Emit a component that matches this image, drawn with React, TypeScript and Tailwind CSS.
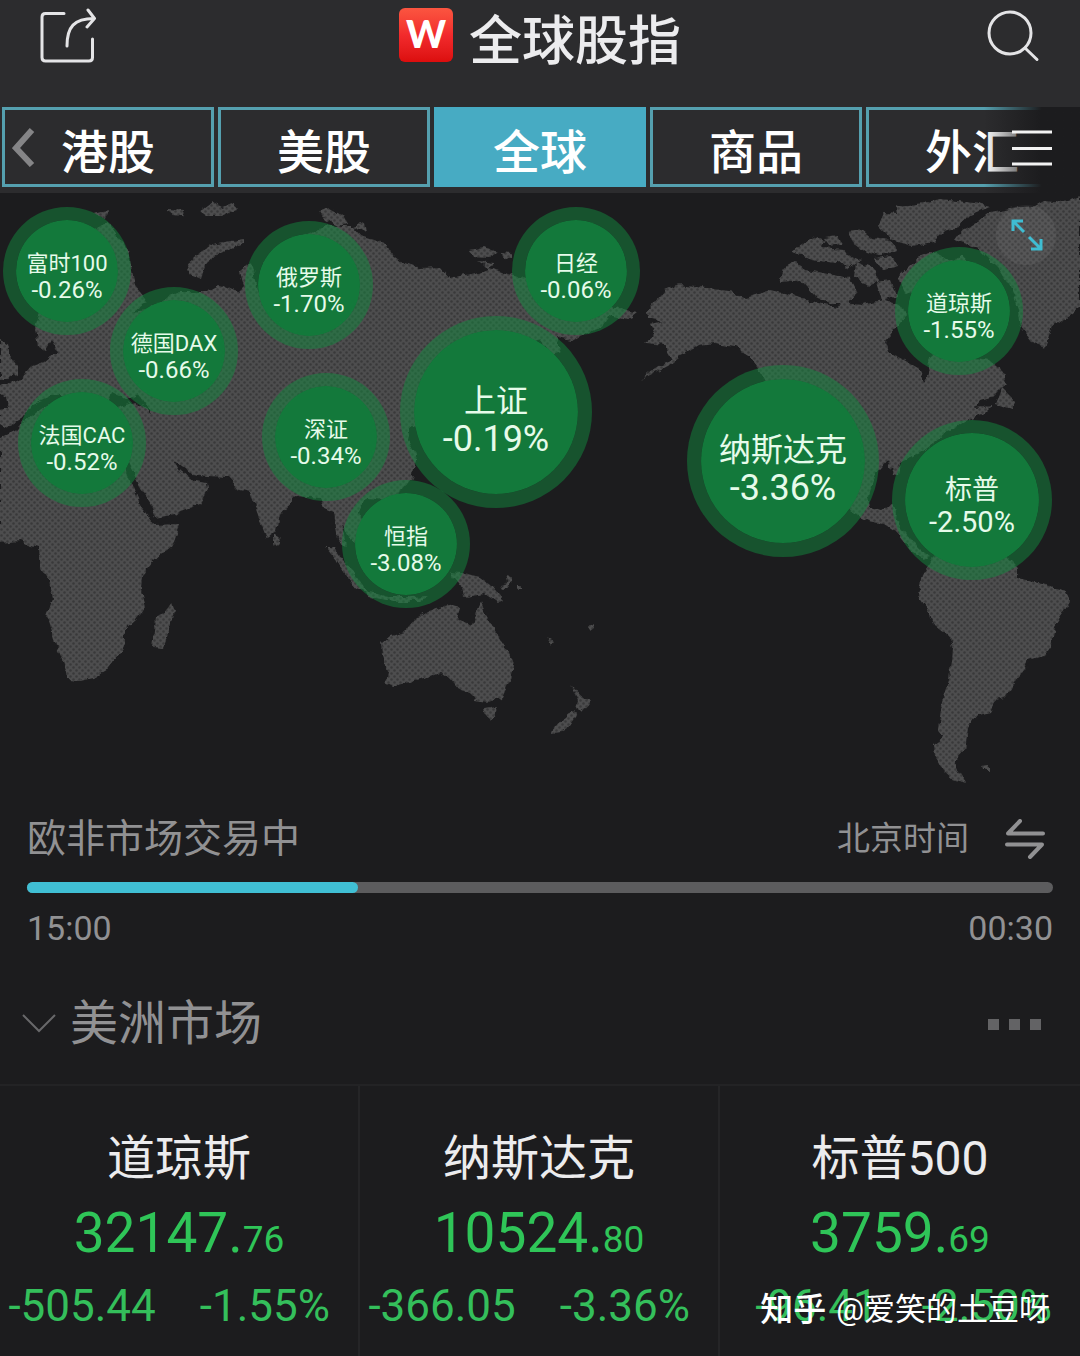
import type { CSSProperties } from 'react'

type BubbleSize = 'sm' | 'md' | 'lg'

interface Bubble {
  name: string
  change: string
  x: number
  y: number
  size: BubbleSize
}

// bubble centres, in map units
const MAP_WIDTH = 1080
const MAP_HEIGHT = 602

const bubbles: Bubble[] = [
  { name: '富时100', change: '-0.26%', x: 67, y: 78, size: 'sm' },
  { name: '德国DAX', change: '-0.66%', x: 174, y: 158, size: 'sm' },
  { name: '法国CAC', change: '-0.52%', x: 82, y: 250, size: 'sm' },
  { name: '俄罗斯', change: '-1.70%', x: 309, y: 92, size: 'sm' },
  { name: '深证', change: '-0.34%', x: 326, y: 244, size: 'sm' },
  { name: '恒指', change: '-3.08%', x: 406, y: 351, size: 'sm' },
  { name: '日经', change: '-0.06%', x: 576, y: 78, size: 'sm' },
  { name: '上证', change: '-0.19%', x: 496, y: 219, size: 'lg' },
  { name: '道琼斯', change: '-1.55%', x: 959, y: 118, size: 'sm' },
  { name: '纳斯达克', change: '-3.36%', x: 783, y: 268, size: 'lg' },
  { name: '标普', change: '-2.50%', x: 972, y: 307, size: 'md' },
]

const bubbleSizes: Record<BubbleSize, { ring: string; name: string; change: string }> = {
  sm: { ring: 'size-32 border-[13px] pt-3', name: 'text-[22px] leading-[26px]', change: 'text-[24px] leading-[26px]' },
  md: { ring: 'size-40 border-[13px] pt-3', name: 'text-[27px] leading-8', change: 'text-[29px] leading-8' },
  lg: { ring: 'size-48 border-[14px] pt-4', name: 'text-[32px] leading-[38px]', change: 'text-[36px] leading-[38px]' },
}

const tabs = ['港股', '美股', '全球', '商品', '外汇']

const quotes = [
  { name: '道琼斯', whole: '32147', decimals: '76', change: '-505.44', percent: '-1.55%' },
  { name: '纳斯达克', whole: '10524', decimals: '80', change: '-366.05', percent: '-3.36%' },
  { name: '标普500', whole: '3759', decimals: '69', change: '-96.41', percent: '-2.50%' },
]

const land = [
  // Europe, Asia
  'M0 452 L0 438 L15 431 L25 421 L48 404 L60 414 L80 420 L84 408 L96 425 L112 420 L118 408 L135 402 L152 414 L138 394 L128 400 L112 392 L108 404 L92 406 L70 396 L50 396 L32 404 L20 420 L6 428 L0 424 L0 410 L8 408 L6 396 L0 392 L0 386 L20 380 L32 366 L44 362 L56 352 L52 340 L46 350 L38 346 L35 328 L44 300 L66 268 L88 234 L108 222 L128 250 L135 286 L148 302 L132 312 L146 310 L170 296 L180 292 L205 292 L220 284 L238 292 L244 286 L240 272 L252 262 L258 290 L262 302 L266 280 L262 262 L290 240 L330 226 L352 226 L362 237 L385 243 L392 255 L402 262 L420 268 L440 267 L450 278 L480 272 L490 268 L508 274 L530 280 L560 290 L595 302 L620 308 L637 313 L628 320 L608 316 L602 328 L585 334 L572 341 L556 338 L562 352 L552 356 L540 340 L516 350 L500 400 L460 420 L424 432 L410 426 L408 440 L417 455 L412 478 L402 490 L385 500 L366 498 L360 512 L366 532 L356 542 L346 534 L342 524 L346 548 L338 540 L334 512 L324 508 L320 498 L296 496 L280 514 L277 530 L267 538 L258 515 L250 492 L240 490 L228 477 L206 476 L192 474 L182 466 L174 460 L180 470 L190 479 L207 482 L208 490 L200 504 L176 514 L156 518 L152 507 L140 487 L130 466 L122 448 Z',
  // Africa
  'M0 450 L30 446 L60 452 L90 456 L120 454 L131 482 L141 506 L154 525 L180 524 L173 545 L155 560 L142 575 L141 590 L145 608 L136 620 L125 630 L125 645 L117 656 L104 672 L94 678 L80 681 L68 680 L62 660 L56 646 L50 624 L47 615 L53 598 L49 580 L40 567 L38 548 L28 545 L20 541 L0 543 Z',
  'M172 603 L175 612 L168 636 L163 648 L152 647 L154 630 L155 617 L165 613 Z',
  'M0 340 L8 344 L10 354 L18 366 L18 374 L8 380 L0 380 Z',
  // Arctic islands north of Russia
  'M187 270 L195 256 L212 244 L244 239 L244 244 L218 254 L206 264 L202 279 L192 276 Z',
  'M165 210 L185 211 L183 216 L172 215 Z',
  'M200 212 L212 203 L222 208 L232 204 L236 209 L218 216 L206 216 Z',
  'M92 214 L108 211 L106 218 Z',
  'M320 211 L330 208 L344 216 L348 224 L338 226 L326 220 Z',
  'M352 226 L364 222 L366 232 Z',
  'M470 250 L484 247 L496 252 L488 258 L474 257 Z',
  'M478 262 L494 264 L488 268 Z',
  'M501 252 L512 253 L512 259 L503 258 Z',
  // South Asia, Indonesia, Papua
  'M273 534 L280 541 L277 546 L273 543 Z',
  'M325 547 L335 547 L344 562 L354 572 L368 592 L356 588 L345 574 L336 560 Z',
  'M366 590 L392 597 L410 597 L428 596 L420 601 L392 601 L370 597 Z',
  'M372 560 L390 545 L400 556 L392 576 L376 576 Z',
  'M410 560 L425 558 L416 566 L422 580 L412 580 Z',
  'M450 572 L463 573 L480 577 L490 585 L503 600 L498 603 L485 594 L465 597 L463 588 Z',
  'M506 575 L512 576 L512 583 L502 588 L500 584 L508 582 Z',
  'M518 586 h4 v4 h-4 Z',
  'M547 638 l6 3 l-2 3 Z',
  'M588 628 l6 -5 l1 4 l-5 4 Z',
  // Australia, New Zealand
  'M382 643 L390 636 L405 632 L415 620 L428 612 L440 608 L448 603 L460 607 L457 619 L473 625 L477 612 L481 602 L486 615 L492 625 L500 640 L508 652 L513 665 L510 680 L502 698 L488 702 L475 700 L468 693 L460 690 L450 678 L440 673 L425 679 L410 682 L393 686 L386 682 L388 672 L383 655 Z',
  'M484 708 L497 706 L495 716 L490 722 L486 716 Z',
  'M571 685 L583 698 L591 701 L581 712 L576 708 L579 700 Z',
  'M573 710 L577 714 L565 732 L551 733 L553 727 L566 718 Z',
  // North America
  'M642 379 L655 368 L672 358 L665 345 L645 343 L655 335 L650 325 L664 322 L648 318 L647 312 L655 302 L665 290 L680 284 L700 287 L735 292 L746 298 L770 290 L796 296 L818 304 L838 308 L842 302 L862 304 L884 300 L900 304 L906 316 L896 328 L884 342 L888 352 L904 360 L918 368 L924 383 L930 374 L928 360 L940 348 L960 356 L990 360 L1003 371 L1006 384 L994 396 L980 400 L974 408 L992 406 L984 414 L968 420 L950 430 L938 440 L922 452 L900 462 L898 476 L893 474 L888 460 L874 476 L868 496 L870 508 L880 511 L892 504 L898 508 L897 522 L910 538 L922 550 L930 556 L924 560 L910 550 L896 532 L884 524 L868 521 L850 511 L830 490 L800 450 L780 410 L762 375 L750 356 L735 347 L715 344 L698 346 L688 352 L680 356 L668 366 Z',
  'M996 404 L1002 388 L1008 394 L1016 402 L1012 409 Z',
  'M780 282 L785 266 L795 261 L806 270 L828 274 L850 278 L858 294 L846 304 L830 304 L814 296 L800 280 Z',
  'M792 252 L806 242 L818 236 L826 242 L822 248 L844 250 L848 256 L836 263 L812 260 Z',
  'M848 232 L862 230 L872 238 L890 240 L896 250 L880 256 L866 252 L852 242 Z',
  'M856 262 L872 268 L880 280 L868 286 L854 276 Z',
  'M876 282 L890 280 L896 296 L882 302 Z',
  'M832 256 L846 254 L860 260 L846 268 Z',
  'M824 238 L838 236 L842 244 L830 246 Z',
  'M874 258 L892 256 L898 266 L884 270 Z',
  'M878 226 L884 213 L898 214 L896 206 L918 204 L940 199 L975 203 L990 207 L970 215 L958 228 L944 232 L934 242 L912 246 L892 240 Z',
  'M898 276 L918 258 L936 252 L950 262 L962 256 L976 272 L992 292 L998 306 L988 312 L976 306 L952 290 L930 284 L906 294 Z',
  // Greenland
  'M1080 196 L1062 203 L1045 201 L1036 206 L1010 208 L990 212 L978 222 L962 230 L955 240 L978 248 L1000 270 L1012 290 L1018 306 L1021 326 L1034 344 L1045 348 L1052 326 L1066 319 L1080 308 Z',
  // South America
  'M930 563 L922 575 L918 595 L928 608 L934 624 L950 637 L952 650 L949 680 L942 705 L938 728 L942 738 L934 744 L935 757 L943 770 L953 779 L966 783 L956 768 L956 760 L965 750 L968 728 L976 716 L990 712 L996 700 L1006 697 L1015 683 L1024 668 L1028 660 L1045 655 L1052 645 L1055 625 L1070 602 L1065 592 L1050 586 L1034 582 L1018 578 L1018 568 L1008 558 L985 548 L955 545 L935 552 Z',
  'M981 766 L988 765 L988 770 L982 770 Z',
]

function ShareIcon() {
  return (
    <svg className="size-full" viewBox="40 8 56 56" fill="none" stroke="#e4e4e6" strokeWidth="3" strokeLinecap="round" strokeLinejoin="round">
      <path d="M64 13.5H45.500Q42 13.500 42 17V57.500Q42 61 45.500 61H89Q92.500 61 92.500 57.500V39" />
      <path d="M67 46C67 27 74 18.500 94 18.500M88 10L94.500 18.500L87 27" />
    </svg>
  )
}

function SearchIcon() {
  return (
    <svg className="size-full" viewBox="984 8 56 56" fill="none" stroke="#e4e4e6" strokeWidth="3" strokeLinecap="round">
      <circle cx="1010" cy="33" r="21" />
      <path d="M1025 48L1037 59.500" />
    </svg>
  )
}

function WorldMap() {
  return (
    <svg className="block w-full" viewBox="0 193 1080 602" aria-hidden="true">
      <defs>
        <pattern id="dots" width="6" height="6" patternUnits="userSpaceOnUse">
          <rect width="6" height="6" fill="#4d4d4e" />
          <circle cx="1.500" cy="1.500" r="1.300" fill="#39393a" />
          <circle cx="4.500" cy="4.500" r="1.300" fill="#39393a" />
        </pattern>
        <filter id="coast" x="0" y="0" width="100%" height="100%">
          <feTurbulence type="fractalNoise" baseFrequency="0.12" numOctaves="2" seed="4" result="noise" />
          <feDisplacementMap in="SourceGraphic" in2="noise" scale="7" xChannelSelector="R" yChannelSelector="G" />
        </filter>
        <mask id="land" maskUnits="userSpaceOnUse" x="0" y="193" width="1080" height="602">
          <g filter="url(#coast)" fill="#fff">
            {land.map((d) => (
              <path key={d} d={d} />
            ))}
          </g>
        </mask>
      </defs>
      <rect x="0" y="193" width="1080" height="602" fill="url(#dots)" mask="url(#land)" />
    </svg>
  )
}

function MapBubble({ bubble }: { bubble: Bubble }) {
  const size = bubbleSizes[bubble.size]
  const place: CSSProperties = {
    left: `${(bubble.x / MAP_WIDTH) * 100}%`,
    top: `${(bubble.y / MAP_HEIGHT) * 100}%`,
  }
  return (
    <button
      type="button"
      style={place}
      className={`absolute flex -translate-x-1/2 -translate-y-1/2 flex-col items-center justify-center rounded-full border-[#128a3e]/50 bg-[#13793b] bg-clip-padding whitespace-nowrap text-[#e6fbea] ${size.ring}`}
    >
      <span className={size.name}>{bubble.name}</span>
      <span className={size.change}>{bubble.change}</span>
    </button>
  )
}

export default function App() {
  return (
    <div className="relative min-h-screen overflow-hidden bg-[#1c1c1e] font-[Roboto,'Noto_Sans_CJK_SC',sans-serif]">
      <header className="flex h-[107px] items-start justify-between bg-[#2c2c2e] px-10 pt-2">
        <button type="button" aria-label="分享" className="size-14">
          <ShareIcon />
        </button>
        <div className="flex items-start gap-4">
          <span className="flex size-[54px] items-center justify-center rounded-md bg-linear-to-b from-[#fb5540] via-[#f22a2c] to-[#dc0d0d] pb-1 font-[Lato,sans-serif] text-[38px] leading-none font-black text-white">
            W
          </span>
          <h1 className="pt-0.5 text-[53px] leading-[64px] font-medium text-[#ececee]">全球股指</h1>
        </div>
        <button type="button" aria-label="搜索" className="size-14">
          <SearchIcon />
        </button>
      </header>

      <nav className="relative grid grid-cols-5 gap-1 bg-[#2c2c2e] px-0.5 pb-1.5">
        {tabs.map((tab) => (
          <button
            key={tab}
            type="button"
            className={`h-20 border-3 pt-2 text-[47px] font-medium text-white ${
              tab === '全球' ? 'border-[#47abc3] bg-[#47abc3]' : 'border-[#55a0af]'
            }`}
          >
            {tab}
          </button>
        ))}
        <svg className="absolute top-5 left-3 h-10 w-6" viewBox="0 0 24 40" fill="none" stroke="#858587" strokeWidth="6" aria-hidden="true">
          <path d="M20 3L4 21L20 38" />
        </svg>
        <div className="absolute inset-y-0 right-0 flex w-24 items-center justify-end bg-linear-to-r from-transparent to-[#1c1c1e] to-60% pr-7 pb-1">
          <button type="button" aria-label="更多市场">
            <svg className="h-9 w-10" viewBox="0 0 40 36" stroke="#f2f2f2" strokeWidth="3">
              <path d="M0 2H40M0 18.500H40M0 34H40" />
            </svg>
          </button>
        </div>
      </nav>

      <section className="relative" aria-label="全球指数地图">
        <WorldMap />
        {bubbles.map((bubble) => (
          <MapBubble key={bubble.name} bubble={bubble} />
        ))}
        <button type="button" aria-label="展开" className="absolute top-3 right-6 size-15 rounded-full bg-white/5 p-3">
          <svg className="size-full" viewBox="0 0 36 36" fill="none" stroke="#3fbdd2" strokeWidth="3">
            <path d="M15 4H5V14M5 4L16 15M33 22V32H23M33 32L21 20" />
          </svg>
        </button>
      </section>

      <section className="px-[27px] pt-5 text-[#919193]">
        <div className="flex h-12 items-center justify-between">
          <h2 className="text-[39px]">欧非市场交易中</h2>
          <button type="button" className="flex items-center gap-9 pr-2 text-[33px]">
            北京时间
            <svg className="size-10" viewBox="0 0 40 40" fill="none" stroke="#919193" strokeWidth="4" strokeLinejoin="round" strokeLinecap="round" aria-hidden="true">
              <path d="M38 14.500H3L15 2M2 25.500H37L25 38" />
            </svg>
          </button>
        </div>
        <div className="mt-[19px] h-[11px] rounded-full bg-[#5c5c5e]" role="progressbar" aria-label="交易进度" aria-valuenow={32}>
          <div className="h-full rounded-full bg-[#40bfd4]" style={{ width: '32.3%' }} />
        </div>
        <div className="mt-[15px] flex justify-between text-[34px] leading-10">
          <span>15:00</span>
          <span>00:30</span>
        </div>
      </section>

      <section>
        <div className="flex items-center justify-between pt-11 pr-[39px] pb-7 pl-[22px]">
          <button type="button" className="flex items-center gap-3.5 text-5xl leading-16 text-[#919193]">
            <svg className="h-5 w-[34px]" viewBox="0 0 34 20" fill="none" stroke="#68686a" strokeWidth="2" aria-hidden="true">
              <path d="M1 1L17 17L33 1" />
            </svg>
            美洲市场
          </button>
          <button type="button" aria-label="更多" className="flex gap-2.5">
            <span className="size-[11px] bg-[#636365]" />
            <span className="size-[11px] bg-[#636365]" />
            <span className="size-[11px] bg-[#636365]" />
          </button>
        </div>

        <div className="grid grid-cols-3 divide-x-2 divide-[#252527] border-y-2 border-[#232325]">
          {quotes.map((quote) => (
            <article key={quote.name} className="pt-[43px] pb-6">
              <h3 className="text-center text-5xl leading-15 text-[#ececee]">{quote.name}</h3>
              <p className="mt-3 text-center text-[55px] leading-16 text-[#2fc558]">
                {quote.whole}.<span className="text-[37px]">{quote.decimals}</span>
              </p>
              <p className="mt-2 flex justify-end gap-11 pr-7 text-[44px] leading-13 text-[#34bf5b]">
                <span>{quote.change}</span>
                <span>{quote.percent}</span>
              </p>
            </article>
          ))}
        </div>
      </section>

      <p className="absolute right-[30px] bottom-[26px] flex items-center gap-2.5 text-[31px] leading-11 text-white">
        <span className="text-[33px] font-medium">知乎</span>
        <span>@爱笑的土豆呀</span>
      </p>
    </div>
  )
}
